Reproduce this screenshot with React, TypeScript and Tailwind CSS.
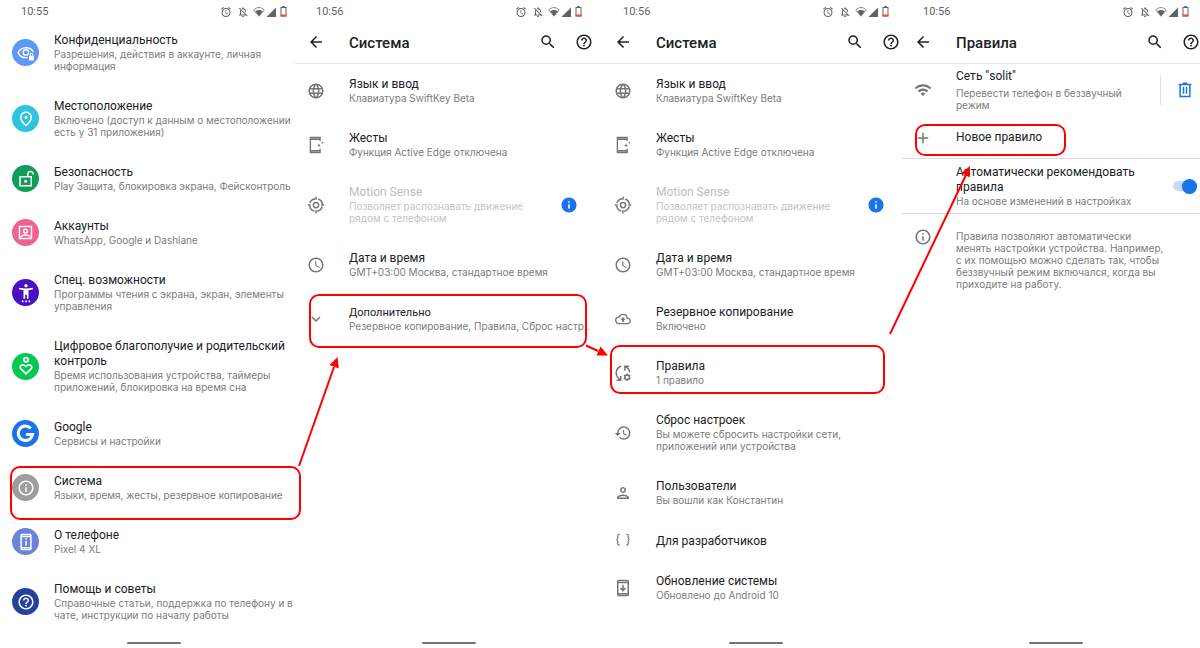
import type { ReactNode } from "react";
import {
  MdAdd,
  MdArrowBack,
  MdExpandMore,
  MdHelpOutline,
  MdInfo,
  MdInfoOutline,
  MdLanguage,
  MdOutlineAccessTime,
  MdOutlineAlarm,
  MdOutlineBackup,
  MdOutlineNotificationsOff,
  MdOutlinePerson,
  MdOutlinePlace,
  MdRestore,
  MdSearch,
  MdWifi,
} from "react-icons/md";

function StatusBar({ time }: { time: string }) {
  return (
    <div className="flex h-5 items-center pt-[3px] pl-[21px] text-[#5f6368]">
      <span className="text-[11px] leading-4">{time}</span>
      <div className="ml-auto flex items-center pr-[11px]">
        <MdOutlineAlarm className="size-3" />
        <MdOutlineNotificationsOff className="ml-[5px] size-3" />
        <svg viewBox="0 0 24 20" className="ml-1 h-[10px] w-3" fill="none">
          <path d="M1.500 6C8-.5 16-.5 22.500 6L12 18.500Z" stroke="currentColor" strokeWidth="1.500" />
          <path d="M4.500 8.500c5-3.500 10-3.500 15 0L12 18Z" fill="currentColor" />
        </svg>
        <svg viewBox="0 0 10 10" className="ml-px size-[10px]">
          <path d="M10 0.500V10H.5Z" fill="currentColor" />
        </svg>
        <svg viewBox="0 0 14 22" className="ml-1 h-[11px] w-[7px]" fill="none">
          <path d="M4.500 0h5v3h-5z" fill="currentColor" />
          <rect x="2" y="3" width="10" height="17" stroke="currentColor" strokeWidth="2" />
          <path d="M1 17h12v4H1z" fill="#f4511e" />
        </svg>
      </div>
    </div>
  );
}

function Header({ title }: { title: string }) {
  return (
    <header className="flex h-[43px] items-center pl-3 text-[#202124]">
      <button type="button" aria-label="Назад">
        <MdArrowBack className="size-[18px]" />
      </button>
      <h1 className="ml-6 grow pt-[2px] text-[15px] leading-5 font-medium">{title}</h1>
      <button type="button" aria-label="Поиск">
        <MdSearch className="size-[18px]" />
      </button>
      <button type="button" aria-label="Справка" className="ml-[18px]">
        <MdHelpOutline className="size-[18px]" />
      </button>
    </header>
  );
}

type Item = {
  icon: ReactNode;
  title: string;
  sub?: string;
  color?: string;
  disabled?: boolean;
  small?: boolean;
};

function Row({ item }: { item: Item }) {
  return (
    <a href="#" className={`flex items-center ${item.sub ? "pt-[14px] pb-[13px]" : "pt-[13px] pb-[10px]"}`}>
      {item.color ? (
        <span
          className={`mr-[15px] ml-3 flex size-[27px] shrink-0 items-center justify-center rounded-full text-white ${item.color}`}
        >
          {item.icon}
        </span>
      ) : (
        <span className="mr-6 ml-3 flex size-[18px] shrink-0 items-center justify-center text-[#757575]">
          {item.icon}
        </span>
      )}
      <span className="min-w-0 grow whitespace-pre">
        <span
          className={`block leading-[15px] ${item.small ? "text-[11px]" : "text-[12px]"} ${item.disabled ? "text-[#bdbdbd]" : "text-[#202124]"}`}
        >
          {item.title}
        </span>
        {item.sub && (
          <span
            className={`block font-[Inter] text-[10px] leading-3 ${item.disabled ? "text-[#c4c4c4]" : "text-[#7c7c7c]"}`}
          >
            {item.sub}
          </span>
        )}
      </span>
      {item.disabled && <MdInfo className="mr-[15px] size-[18px] shrink-0 text-[#1a73e8]" />}
    </a>
  );
}

function HomeBar() {
  return <div className="absolute bottom-1 left-[127px] h-[2px] w-[54px] rounded-full bg-[#757575]" />;
}

const EyeIcon = () => (
  <svg viewBox="0 0 24 24" className="size-[18px]" fill="none" stroke="currentColor" strokeWidth="1.800">
    <path d="M14 18c-6 1-10.500-1.500-12.500-6.500C5.500 3 17.500 3 22 10.500" />
    <circle cx="11.800" cy="11.300" r="3.600" />
    <path d="M16 15.500h6.500V22H16z" fill="currentColor" stroke="none" />
    <path d="M17.700 15.500V14a1.600 1.600 0 0 1 3.200 0v1.500" strokeWidth="1.400" />
  </svg>
);
const LockOpenIcon = () => (
  <svg viewBox="0 0 24 24" className="size-[18px]" fill="none" stroke="currentColor" strokeWidth="2">
    <rect x="4" y="9" width="15" height="12" />
    <path d="M14.500 9V5.500a3.500 3.500 0 0 1 7 0V6" />
    <circle cx="11.500" cy="15" r="2" fill="currentColor" stroke="none" />
  </svg>
);
const AccountIcon = () => (
  <svg viewBox="0 0 24 24" className="size-[17px]" fill="none" stroke="currentColor" strokeWidth="2">
    <rect x="3.500" y="3.500" width="17" height="17" />
    <circle cx="12" cy="10" r="2.700" />
    <path d="M5 18.500c3-4 11-4 14 0" />
  </svg>
);
const AccessibilityIcon = () => (
  <svg viewBox="0 0 24 24" className="size-5" fill="currentColor">
    <circle cx="12" cy="3.200" r="2" />
    <path d="M4 5.700c5 1.200 11 1.200 16 0l.5 1.900c-1.900.5-3.700.8-5.500 1V19h-2v-5h-2v5H9V8.600c-1.800-.2-3.600-.5-5.500-1zM7 21h2v2H7zm4 0h2v2h-2zm4 0h2v2h-2z" />
  </svg>
);
const WellbeingIcon = () => (
  <svg viewBox="0 0 24 24" className="size-5" fill="none" stroke="currentColor" strokeWidth="2">
    <circle cx="12" cy="4.500" r="2.600" />
    <path d="M12 21.500 6 15.500C3 12 8 8.500 12 12.500c4-4 9-.5 6 3Z" />
  </svg>
);
const GoogleIcon = () => (
  <svg viewBox="0 0 24 24" className="size-[21px]" fill="none" stroke="currentColor" strokeWidth="3.400">
    <path d="M18 6.200a8.200 8.200 0 1 0 2 7H12.500" />
  </svg>
);
const PhoneInfoIcon = () => (
  <svg viewBox="0 0 24 24" className="size-[18px]" fill="none" stroke="currentColor" strokeWidth="2">
    <rect x="5.500" y="2" width="13" height="20" rx="1" />
    <path d="M5.500 4.500h13M5.500 19.500h13M12 10.500v6M12 7v2" />
  </svg>
);
const GesturesIcon = () => (
  <svg viewBox="0 0 24 24" className="size-[18px]" fill="none" stroke="currentColor" strokeWidth="1.800">
    <path d="M17.500 6.500V2h-13v20h13v-5M4.500 4.300h13M4.500 19.700h13" />
    <path d="m16 10 .7 1.800 1.800.7-1.800.7L16 15l-.7-1.800-1.800-.7 1.800-.7zM20.500 7l.5 1.500 1.500.5-1.500.5-.5 1.500-.5-1.500-1.500-.5 1.500-.5z" fill="currentColor" stroke="none" />
  </svg>
);
const MotionIcon = () => (
  <svg viewBox="0 0 24 24" className="size-[18px]" fill="none" stroke="currentColor" strokeWidth="2">
    <circle cx="12" cy="12" r="3.500" />
    <circle cx="12" cy="12" r="8.500" strokeDasharray="9.350 4" strokeDashoffset="-2" />
    <path d="M12 1v4M12 19v4M1 12h4M19 12h4" />
  </svg>
);
const RulesIcon = () => (
  <svg viewBox="0 0 24 24" className="size-[18px]" fill="none" stroke="currentColor" strokeWidth="2">
    <path d="M9.500 3C2 5.500.5 14.500 7.500 20.500M3.500 21.500h5.500V16M14.500 9V3h5.500M15 3.500c3.500 1.500 5.500 4 6 7.500" />
    <circle cx="17.500" cy="17.500" r="3" />
    <path d="M17.500 12.500v2M17.500 20.500v2M13.200 15l1.700 1M20.100 19l1.700 1M13.200 20l1.700-1M20.100 16l1.700-1" />
  </svg>
);
const BracesIcon = () => (
  <svg viewBox="0 0 24 24" className="size-[18px]" fill="none" stroke="currentColor" strokeWidth="1.600">
    <path d="M8 3H7C5.500 3 5 3.800 5 5v2.500C5 9 4.300 10 3 10c1.300 0 2 1 2 2.500v3c0 1.200.5 2 2 2h1M16 3h1c1.500 0 2 .8 2 2v2.500c0 1.500.7 2.500 2 2.500-1.300 0-2 1-2 2.500v3c0 1.200-.5 2-2 2h-1" />
  </svg>
);
const UpdateIcon = () => (
  <svg viewBox="0 0 24 24" className="size-[18px]" fill="none" stroke="currentColor" strokeWidth="2">
    <rect x="5" y="2" width="14" height="20" rx="1" />
    <path d="M5 4.500h14M5 19.500h14M12 7.500V15M8.500 12l3.500 3.500 3.500-3.500" />
  </svg>
);
const TrashIcon = () => (
  <svg viewBox="0 0 24 24" className="size-[18px]" fill="none" stroke="currentColor" strokeWidth="2">
    <path d="M3.500 4.500h17M9 3h6M5.500 5v15.500h13V5M10 8v9M14 8v9" />
  </svg>
);

const mainItems: Item[] = [
  { icon: <EyeIcon />, color: "bg-[#5e97f6]", title: "Конфиденциальность", sub: "Разрешения, действия в аккаунте, личная\nинформация" },
  { icon: <MdOutlinePlace className="size-[18px]" />, color: "bg-[#2ec5dc]", title: "Местоположение", sub: "Включено (доступ к данным о местоположении\nесть у 31 приложения)" },
  { icon: <LockOpenIcon />, color: "bg-[#0f9d58]", title: "Безопасность", sub: "Play Защита, блокировка экрана, Фейсконтроль" },
  { icon: <AccountIcon />, color: "bg-[#f06292]", title: "Аккаунты", sub: "WhatsApp, Google и Dashlane" },
  { icon: <AccessibilityIcon />, color: "bg-[#4a0fc0]", title: "Спец. возможности", sub: "Программы чтения с экрана, экран, элементы\nуправления" },
  { icon: <WellbeingIcon />, color: "bg-[#00c853]", title: "Цифровое благополучие и родительский\nконтроль", sub: "Время использования устройства, таймеры\nприложений, блокировка на время сна" },
  { icon: <GoogleIcon />, color: "bg-[#1a73e8]", title: "Google", sub: "Сервисы и настройки" },
  { icon: <MdInfoOutline className="size-[18px]" />, color: "bg-[#9e9e9e]", title: "Система", sub: "Языки, время, жесты, резервное копирование" },
  { icon: <PhoneInfoIcon />, color: "bg-[#6b83d9]", title: "О телефоне", sub: "Pixel 4 XL" },
  { icon: <MdHelpOutline className="size-[18px]" />, color: "bg-[#24429c]", title: "Помощь и советы", sub: "Справочные статьи, поддержка по телефону и в\nчате, инструкции по началу работы" },
];

const systemItems: Item[] = [
  { icon: <MdLanguage className="size-[18px]" />, title: "Язык и ввод", sub: "Клавиатура SwiftKey Beta" },
  { icon: <GesturesIcon />, title: "Жесты", sub: "Функция Active Edge отключена" },
  { icon: <MotionIcon />, title: "Motion Sense", sub: "Позволяет распознавать движение\nрядом с телефоном", disabled: true },
  { icon: <MdOutlineAccessTime className="size-[18px]" />, title: "Дата и время", sub: "GMT+03:00 Москва, стандартное время" },
];

const advancedItems: Item[] = [
  { icon: <MdOutlineBackup className="size-4" />, title: "Резервное копирование", sub: "Включено" },
  { icon: <RulesIcon />, title: "Правила", sub: "1 правило" },
  { icon: <MdRestore className="size-[18px]" />, title: "Сброс настроек", sub: "Вы можете сбросить настройки сети,\nприложений или устройства" },
  { icon: <MdOutlinePerson className="size-[18px]" />, title: "Пользователи", sub: "Вы вошли как Константин" },
  { icon: <BracesIcon />, title: "Для разработчиков" },
  { icon: <UpdateIcon />, title: "Обновление системы", sub: "Обновлено до Android 10" },
];

const list = (items: Item[]) => items.map((item) => <Row key={item.title} item={item} />);

function Annotations() {
  return (
    <svg
      viewBox="0 0 1200 648"
      preserveAspectRatio="none"
      className="pointer-events-none absolute inset-0 h-[648px] w-full"
      fill="none"
      stroke="#f00"
      strokeWidth="2"
      aria-hidden="true"
    >
      <rect x="11" y="467" width="289" height="52" rx="9" />
      <rect x="310" y="295" width="276" height="52" rx="9" />
      <rect x="611" y="346" width="273" height="47" rx="9" />
      <rect x="916" y="125" width="149" height="30" rx="9" />
      <path d="M299 466 334 367M586 345.500 598 351M890 334 966 175" />
      <path d="M337.500 357 338.800 368.500 329.500 365ZM608 355.500 596.500 355.500 600.500 346.500ZM970 166 969.800 177.500 961.500 173Z" fill="#f00" stroke="none" />
    </svg>
  );
}

export default function App() {
  return (
    <main className="relative grid min-h-[648px] grid-cols-[295fr_307fr_300fr_298fr] overflow-hidden bg-white font-[Roboto,'Noto_Sans',sans-serif]">
      <section className="relative min-w-0">
        <div className="-mr-[3px]">
          <StatusBar time="10:55" />
          <div className="-mt-px">{list(mainItems)}</div>
        </div>
        <HomeBar />
      </section>

      <section className="relative min-w-0">
        <div className="border-b border-[#e3e3e3] pr-[9px]">
          <StatusBar time="10:56" />
          <Header title="Система" />
        </div>
        <div className="-mt-px pr-[9px]">
          {list(systemItems)}
          <Row
            item={{
              icon: <MdExpandMore className="size-[18px]" />,
              title: "Дополнительно",
              sub: "Резервное копирование, Правила, Сброс настр..",
              small: true,
            }}
          />
        </div>
        <HomeBar />
      </section>

      <section className="relative min-w-0">
        <div className="border-b border-[#e3e3e3] pr-[2px]">
          <StatusBar time="10:56" />
          <Header title="Система" />
        </div>
        <div className="-mt-px pr-[2px]">
          {list(systemItems)}
          {list(advancedItems)}
        </div>
        <HomeBar />
      </section>

      <section className="relative min-w-0">
        <div className="border-b border-[#e3e3e3]">
          <StatusBar time="10:56" />
          <Header title="Правила" />
        </div>
        <div className="flex h-[51px] items-center">
          <MdWifi className="mr-6 ml-3 size-[18px] shrink-0 text-[#757575]" />
          <a href="#" className="grow whitespace-pre">
            <span className="block text-[12px] leading-[15px] text-[#202124]">Сеть "solit"</span>
            <span className="mt-[3px] block font-[Inter] text-[10px] leading-3 text-[#7c7c7c]">
              {"Перевести телефон в беззвучный\nрежим"}
            </span>
          </a>
          <button
            type="button"
            aria-label="Удалить"
            className="flex h-[30px] items-center border-l border-[#e0e0e0] pr-[6px] pl-[15px] text-[#1a73e8]"
          >
            <TrashIcon />
          </button>
        </div>
        <a href="#" className="flex h-11 items-center border-b border-[#dadce0] pt-[2px]">
          <MdAdd className="mr-6 ml-3 size-[18px] shrink-0 text-[#757575]" />
          <span className="text-[12px] leading-[15px] text-[#202124]">Новое правило</span>
        </a>
        <label className="flex h-[55px] cursor-pointer items-center border-b border-[#dadce0] pl-[54px]">
          <span className="grow whitespace-pre">
            <span className="block text-[12px] leading-[15px] text-[#202124]">
              {"Автоматически рекомендовать\nправила"}
            </span>
            <span className="block font-[Inter] text-[10px] leading-3 text-[#7c7c7c]">
              На основе изменений в настройках
            </span>
          </span>
          <input
            type="checkbox"
            role="switch"
            defaultChecked
            className="mr-[3px] flex h-[10px] w-6 shrink-0 appearance-none items-center justify-end rounded-full bg-[#c6dafa] before:size-[15px] before:shrink-0 before:rounded-full before:bg-[#1a73e8] before:shadow-sm before:content-['']"
          />
        </label>
        <div className="flex pt-4 pl-3">
          <MdInfoOutline className="mr-6 -mt-[2px] size-[18px] shrink-0 text-[#757575]" />
          <p className="font-[Inter] text-[10px] leading-3 whitespace-pre text-[#7c7c7c]">
            {"Правила позволяют автоматически\nменять настройки устройства. Например,\nс их помощью можно сделать так, чтобы\nбеззвучный режим включался, когда вы\nприходите на работу."}
          </p>
        </div>
        <HomeBar />
      </section>

      <Annotations />
    </main>
  );
}
